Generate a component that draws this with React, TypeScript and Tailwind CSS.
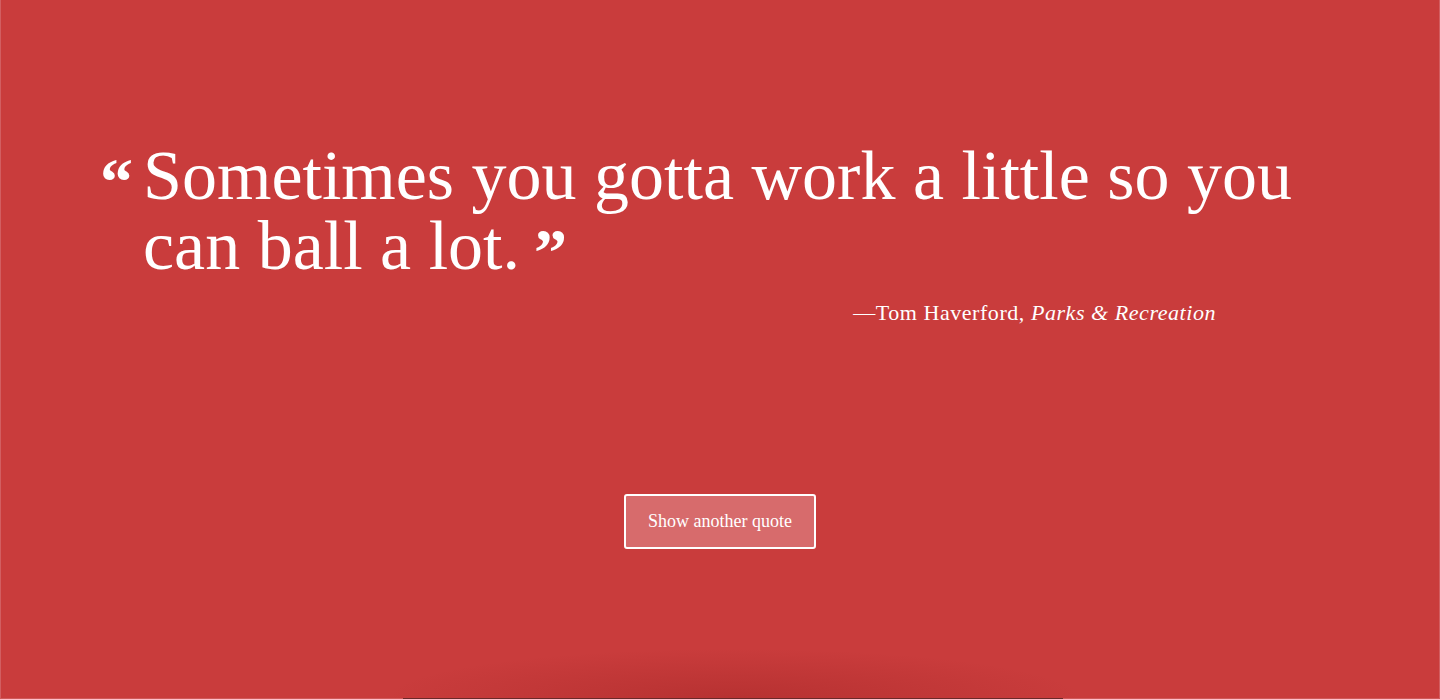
import React from 'react';

export default function App() {
    return (
        <div className="h-[699px] w-full bg-[#c93c3c] overflow-hidden" style={{ fontFamily: '"Liberation Serif", serif' }}>
            <div className="relative h-[698px] bg-[#c93c3c] border-x border-[#d8757a]/60 overflow-hidden">
                <div className="pt-[141px] pl-[99px]">
                    <div className="flex items-start">
                        <span className="text-[66px] font-bold leading-none text-white mr-[10px] mt-[8px]">&ldquo;</span>
                        <p className="text-[70px] leading-[70px] text-white">
                            Sometimes you gotta work a little so you<br />can ball a lot.
                            <span className="text-[66px] font-bold leading-none align-top ml-[14px] inline-block mt-[8px]">&rdquo;</span>
                        </p>
                    </div>
                    <div className="w-[1116px] text-right mt-[11px] text-[22px] tracking-wide text-white">
                        &mdash;Tom Haverford, <em>Parks &amp; Recreation</em>
                    </div>
                </div>
                <div className="flex justify-center mt-[165px]">
                    <button className="w-[192px] h-[55px] border-2 border-white rounded-[3px] bg-[#d76b6c] text-white text-[18px]">
                        Show another quote
                    </button>
                </div>
                <div className="absolute bottom-0 left-[380px] w-[706px] h-[50px] bg-[radial-gradient(ellipse_at_bottom,rgba(150,30,30,0.35),transparent_70%)]"></div>
            </div>
            <div className="flex h-px bg-[#d05a5a]">
                <div className="ml-[403px] w-[660px] bg-[#6a2a2a]"></div>
            </div>
        </div>
    );
}
